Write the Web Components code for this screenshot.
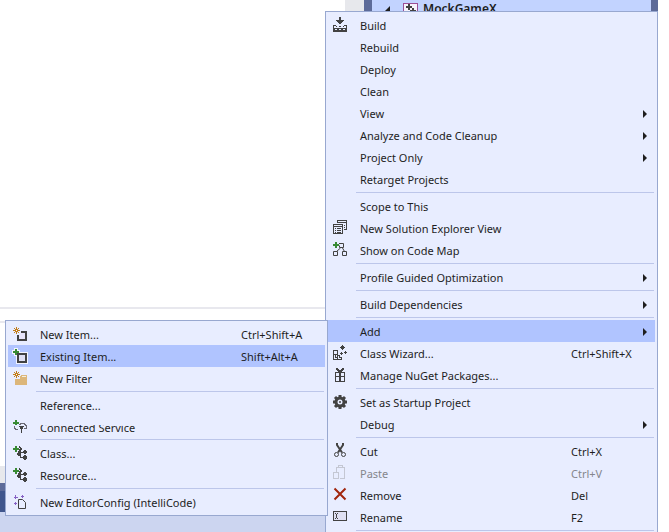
<!DOCTYPE html>
<html lang="en">
<head>
<meta charset="utf-8">
<title>Solution Explorer</title>
<style>
    html, body {
        height: 100%;
        margin: 0;
    }

    body {
        background: #fff;
        color: #1e1e1e;
        font: 11px/22px "Noto Sans", "Open Sans", sans-serif;
        overflow: hidden;
    }
</style>
</head>
<body>
<ide-window>
    <ide-tree-row slot="tree">MockGameX</ide-tree-row>
    <ide-menu slot="menu" class="context" label="Project">
        <ide-menu-item icon="build">Build</ide-menu-item>
        <ide-menu-item>Rebuild</ide-menu-item>
        <ide-menu-item>Deploy</ide-menu-item>
        <ide-menu-item>Clean</ide-menu-item>
        <ide-menu-item more>View</ide-menu-item>
        <ide-menu-item more>Analyze and Code Cleanup</ide-menu-item>
        <ide-menu-item more>Project Only</ide-menu-item>
        <ide-menu-item>Retarget Projects</ide-menu-item>
        <ide-menu-separator></ide-menu-separator>
        <ide-menu-item>Scope to This</ide-menu-item>
        <ide-menu-item icon="windows">New Solution Explorer View</ide-menu-item>
        <ide-menu-item icon="map">Show on Code Map</ide-menu-item>
        <ide-menu-separator></ide-menu-separator>
        <ide-menu-item more>Profile Guided Optimization</ide-menu-item>
        <ide-menu-separator></ide-menu-separator>
        <ide-menu-item more>Build Dependencies</ide-menu-item>
        <ide-menu-separator></ide-menu-separator>
        <ide-menu-item more active>Add
            <ide-menu slot="submenu" class="submenu" label="Add">
                <ide-menu-item icon="new-item" keys="Ctrl+Shift+A">New Item...</ide-menu-item>
                <ide-menu-item icon="existing-item" keys="Shift+Alt+A" active>Existing Item...</ide-menu-item>
                <ide-menu-item icon="new-filter">New Filter</ide-menu-item>
                <ide-menu-separator></ide-menu-separator>
                <ide-menu-item>Reference...</ide-menu-item>
                <ide-menu-item icon="service" cropped>Connected Service</ide-menu-item>
                <ide-menu-separator></ide-menu-separator>
                <ide-menu-item icon="class">Class...</ide-menu-item>
                <ide-menu-item icon="class">Resource...</ide-menu-item>
                <ide-menu-separator></ide-menu-separator>
                <ide-menu-item icon="config">New EditorConfig (IntelliCode)</ide-menu-item>
            </ide-menu>
        </ide-menu-item>
        <ide-menu-item icon="wizard" keys="Ctrl+Shift+X">Class Wizard...</ide-menu-item>
        <ide-menu-item icon="nuget">Manage NuGet Packages...</ide-menu-item>
        <ide-menu-separator></ide-menu-separator>
        <ide-menu-item icon="gear">Set as Startup Project</ide-menu-item>
        <ide-menu-item more>Debug</ide-menu-item>
        <ide-menu-separator></ide-menu-separator>
        <ide-menu-item icon="cut" keys="Ctrl+X">Cut</ide-menu-item>
        <ide-menu-item icon="paste" keys="Ctrl+V" disabled>Paste</ide-menu-item>
        <ide-menu-item icon="remove" keys="Del">Remove</ide-menu-item>
        <ide-menu-item icon="rename" keys="F2">Rename</ide-menu-item>
        <ide-menu-separator></ide-menu-separator>
    </ide-menu>
</ide-window>

<script>
//pieces shared by several icons
const PLUS = '<path fill="#388a34" d="M3 1h2v2h2v2h-2v2h-2v-2h-2v-2h2z"/>';
const SPARK = `
    <path stroke="#c27d1a" d="M4.500 1v7M1 4.500h7M2 2l5 5M7 2l-5 5" shape-rendering="auto"/>
    <path fill="#fff" d="M4 4h1v1h-1z"/>`;

//all icons are drawn on a 16x16 grid
const ICONS = {
    'build': `
        <path fill="#424242" d="M7 0h2v3h3v1h-1v1h-1v1h-1v1h-2v-1h-1v-1h-1v-1h-1v-1h3z"/>
        <path fill="#424242" fill-rule="evenodd" d="M1 8h3v1h-2v2h12v-2h-2v-1h3v7h-14zM3 12v1h2v-1zM7 12v1h2v-1zM11 12v1h2v-1z"/>
        <path fill="#424242" d="M4 9h1v1h-1zM7 9h2v1h-2zM11 9h1v1h-1z"/>`,
    'windows': `
        <path fill="#424242" fill-rule="evenodd" d="M5 0h10v10h-3v-1h2v-6h-8v0h-1z"/>
        <path fill="#424242" fill-rule="evenodd" d="M1 4h10v10h-10zM2 7v6h8v-6z"/>
        <path stroke="#424242" d="M3 8.500h1M5 8.500h4M3 10.500h1M5 10.500h4M3 12.500h1M5 12.500h4M12 5.500h1M12 7.500h1"/>
        <path stroke="#e8edff" d="M2 5.500h8M6 1.500h8"/>`,
    'map': `
        <path fill="none" stroke="#424242" d="M7 1.500h4.500v4h-4v-2M8.500 6l-4 3.500M10.500 6l2 3.500M1.500 9.500h4v4h-4zM10.500 9.500h4v4h-4z" shape-rendering="auto"/>
        <path fill="#388a34" d="M3 0h2v2h2v2h-2v2h-2v-2h-2v-2h2z"/>`,
    'wizard': `
        <path fill="none" stroke="#424242" d="M1.500 5.500h4v9h-4zM1 9.500h5M5.500 10.500h2v2h2v2h-4M3.500 10v2h2"/>
        <path fill="#424242" d="M10 0h1v1h1v1h1v1h-1v1h-1v1h-1v-1h-1v-1h-1v-1h1v-1h1zM13 6h1v1h1v1h-1v1h-1v-1h-1v-1h1zM9 7h1v1h1v1h-1v1h-1v-1h-1v-1h1z"/>`,
    'nuget': `
        <path fill="#424242" fill-rule="evenodd" d="M3 5h10v10h-10zM4 6v3h3v-3zM9 6v3h3v-3zM4 10v4h3v-4zM9 10v4h3v-4z"/>
        <path fill="#424242" d="M4 1h2v1h1v1h2v-1h1v-1h2v2h-1v1h-1v1h-4v-1h-1v-1h-1z"/>`,
    'gear': `
        <g shape-rendering="auto">
            <path stroke="#424242" stroke-width="3" d="M8 1v3M8 12v3M1 8h3M12 8h3M3 3l2 2M11 11l2 2M13 3l-2 2M5 11l-2 2"/>
            <circle cx="8" cy="8" r="4" fill="#e8edff" stroke="#424242" stroke-width="3"/>
            <circle cx="8" cy="8" r="1" fill="#424242"/>
        </g>`,
    'cut': `
        <g shape-rendering="auto" fill="none" stroke="#424242">
            <path stroke-width="2" d="M5 0v2l5 7.500M11 0v2l-5 7.500"/>
            <circle cx="4.500" cy="11.500" r="2"/>
            <circle cx="11.500" cy="11.500" r="2"/>
        </g>`,
    'paste': `
        <path fill="none" stroke="#c4c7d3" d="M4.500 7v-4.500h8v11h-5M6.500 2v-1.500h4v1.500M1.500 7.500h5v6h-5z"/>
        <path fill="#c4c7d3" d="M6 2h5v1h-5z"/>`,
    'remove': `
        <path stroke="#a1260d" stroke-width="2" d="M2.500 1.500l11 11M13.500 1.500l-11 11" shape-rendering="auto"/>`,
    'rename': `
        <path fill="#dfe0f2" stroke="#424242" d="M1.500 2.500h13v9h-13z"/>
        <path fill="#424242" d="M3 4h1v1h1v-1h1v1h-1v4h1v1h-1v-1h-1v1h-1v-1h1v-4h-1z"/>`,
    'new-item': `
        <path fill="#e7e4fa" stroke="#424242" stroke-width="2" d="M9 6h5v8h-8v-5"/>
        ${SPARK}`,
    'existing-item': `
        <path fill="#f4f5ff" d="M2 0h4v2h2v2h8v12h-12v-8h-2v-2h-2v-4h2z"/>
        <path fill="#dfdff2" stroke="#424242" stroke-width="2" d="M6 6h8v8h-8z"/>
        ${PLUS}`,
    'new-filter': `
        <path fill="#dcb67a" d="M8 6h1v-1h6v10h-12v-6h5z"/>
        <path fill="#f5eedf" d="M10 6h4v1h-4z"/>
        ${SPARK}`,
    'service': `
        <path fill="none" stroke="#696974" d="M7 5.500h1v-1h4v1h1v1h1v3h-2M2 7v2h1v1h3" />
        <path fill="#424242" d="M7 7h5v1h-1v2h-1v4h-1v-4h-1v-2h-1z"/>
        <path fill="#388a34" d="M3 1h2v2h2v2h-2v1h-2v-1h-2v-2h2z"/>`,
    'class': `
        <path fill="none" stroke="#424242" d="M8.500 4v8.500h3M9 7.500h3M5 9.500h3"/>
        <path fill="#424242" d="M7 1h1v1h1v1h1v2h-1v1h-1v1h-2v-1h1v-2h1v-1h-1zM12 5h2v1h1v2h-1v1h-2v-1h-1v-2h1zM12 10h2v1h1v3h-1v1h-2v-1h-1v-3h1zM5 8h1v-1h2v1h1v2h-1v1h-2v-1h-1z"/>
        ${PLUS}`,
    'config': `
        <path fill="none" stroke="#424242" d="M6.500 5.500h4l3 3v6h-7z" shape-rendering="auto"/>
        <path stroke="#8661c5" d="M3.500 1v4M2 3.500h4M10.500 1v3M9 2.500h3M3.500 8v3M2 9.500h3"/>`,
    'cpp-project': `
        <path fill="#f6f2fb" stroke="#9b4f96" d="M.5 .5h14v14h-14z"/>
        <path stroke="#424242" stroke-width="2" d="M3 4h6M6 1v6M7 8h6M10 5v6"/>`
};

/*
class IdeIcon
draws one of the ICONS by its name
*/
class IdeIcon extends HTMLElement {
    constructor() {
        super();
        this.attachShadow({mode: 'open'});
    }

    connectedCallback() {
        this.shadowRoot.innerHTML = `
            <style>
                :host { display: block; width: 16px; height: 16px; }
                svg { display: block; }
            </style>
            <svg width="16" height="16" viewBox="0 0 16 16" shape-rendering="crispEdges" aria-hidden="true">
                ${ICONS[this.getAttribute('name')] || ''}
            </svg>
        `;
    }
}

/*
class IdeMenuItem
one command of a menu
attributes: icon, keys, more (has a submenu), active, disabled, cropped
*/
class IdeMenuItem extends HTMLElement {
    constructor() {
        super();
        this.attachShadow({mode: 'open'});
    }

    connectedCallback() {
        const keys = this.getAttribute('keys');
        const more = this.hasAttribute('more');

        this.shadowRoot.innerHTML = `
            <style>
                :host { display: block; position: relative; }
                button {
                    display: grid;
                    grid-template-columns: 16px 1fr 84px;
                    column-gap: 12px;
                    align-items: center;
                    width: 100%;
                    height: 22px;
                    padding: 0 0 0 4px;
                    border: 0;
                    background: none;
                    color: inherit;
                    font: inherit;
                    text-align: left;
                    white-space: nowrap;
                }
                button:hover, :host([active]) > button { background: #b0c4ff; }
                button:disabled { color: #84868c; background: none; }
                .label, .keys { padding-top: 2px; line-height: 20px; }
                :host([cropped]) button { height: 21px; }
                :host([cropped]) .label { clip-path: inset(9px 0 0 0); }
                .arrow { justify-self: end; padding: 2px 8px 0 0; }
                svg { display: block; }
            </style>
            <button type="button" ${this.hasAttribute('disabled') ? 'disabled' : ''} ${more ? 'aria-haspopup="menu"' : ''}>
                <ide-icon name="${this.getAttribute('icon') || ''}"></ide-icon>
                <span class="label"><slot></slot></span>
                ${keys ? `<span class="keys">${keys}</span>` : ''}
                ${more ? '<span class="arrow"><svg width="4" height="8" viewBox="0 0 4 8"><path fill="#1e1e1e" d="M0 0l4 4-4 4z"/></svg></span>' : ''}
            </button>
            <slot name="submenu"></slot>
        `;
    }
}

/*
class IdeMenuSeparator
thin line between two groups of commands
*/
class IdeMenuSeparator extends HTMLElement {
    constructor() {
        super();
        this.attachShadow({mode: 'open'}).innerHTML = `
            <style>
                :host { display: block; padding: 2px 1px 2px 28px; }
                div { height: 1px; background: #bcc6ea; }
            </style>
            <div role="separator"></div>
        `;
    }
}

/*
class IdeMenu
popup panel, either the context menu itself or a submenu left of its item
*/
class IdeMenu extends HTMLElement {
    constructor() {
        super();
        this.attachShadow({mode: 'open'}).innerHTML = `
            <style>
                :host {
                    display: block;
                    position: absolute;
                    box-sizing: border-box;
                    padding: 2px;
                    border: 1px solid #98a8d0;
                    background: #e8edff;
                }
                :host(.context) { top: 11px; right: 11px; width: 333px; }
                :host(.submenu) { top: 0; right: 100%; width: 323px; }
            </style>
            <nav><slot></slot></nav>
        `;
    }

    connectedCallback() {
        this.shadowRoot.querySelector('nav').setAttribute('aria-label', this.getAttribute('label'));
    }
}

/*
class IdeTreeRow
selected project in the solution tree
*/
class IdeTreeRow extends HTMLElement {
    constructor() {
        super();
        this.attachShadow({mode: 'open'}).innerHTML = `
            <style>
                :host {
                    display: flex;
                    align-items: center;
                    height: 18px;
                    padding-left: 11px;
                    background: #c2d3ff;
                    font-size: 12px;
                    font-weight: 600;
                }
                ide-icon { margin: 4px 4px 0 13px; }
            </style>
            <svg width="7" height="7" viewBox="0 0 7 7"><path fill="#1e1e1e" d="M7 0v7h-7z"/></svg>
            <ide-icon name="cpp-project"></ide-icon>
            <slot></slot>
        `;
    }
}

/*
class IdeWindow
editor, status bars and the docked solution tree behind the menus
*/
class IdeWindow extends HTMLElement {
    constructor() {
        super();
        this.attachShadow({mode: 'open'}).innerHTML = `
            <style>
                :host {
                    display: grid;
                    grid-template-columns: 1fr 305px;
                    position: relative;
                    height: 100vh;
                    overflow: hidden;
                }
                main { display: flex; flex-direction: column; }
                .page { height: 307px; border-bottom: 2px solid #e8e8ee; }
                .page + .page { height: 12px; }
                .rest { flex: 1; }
                .tabs { height: 17px; background: #e7e8ec; }
                .frame { height: 8px; background: #5d6b99; }
                .bar { height: 21px; background: #40568d; }
                .status { height: 20px; background: #ccd5f0; }
                .dock { display: flex; }
                .gutter { width: 19px; margin-left: -19px; background: #e7e8ec; }
                aside {
                    flex: 1;
                    margin-right: 11px;
                    border: 0 solid #5d6b99;
                    border-width: 0 7px 0 8px;
                }
            </style>
            <main>
                <div class="page"></div>
                <div class="page"></div>
                <div class="rest"></div>
                <div class="tabs"></div>
                <div class="frame"></div>
                <div class="bar"></div>
                <div class="status"></div>
            </main>
            <div class="dock">
                <div class="gutter"></div>
                <aside><slot name="tree"></slot></aside>
            </div>
            <slot name="menu"></slot>
        `;
    }
}

window.customElements.define('ide-icon', IdeIcon);
window.customElements.define('ide-menu-item', IdeMenuItem);
window.customElements.define('ide-menu-separator', IdeMenuSeparator);
window.customElements.define('ide-menu', IdeMenu);
window.customElements.define('ide-tree-row', IdeTreeRow);
window.customElements.define('ide-window', IdeWindow);
</script>
</body>
</html>
